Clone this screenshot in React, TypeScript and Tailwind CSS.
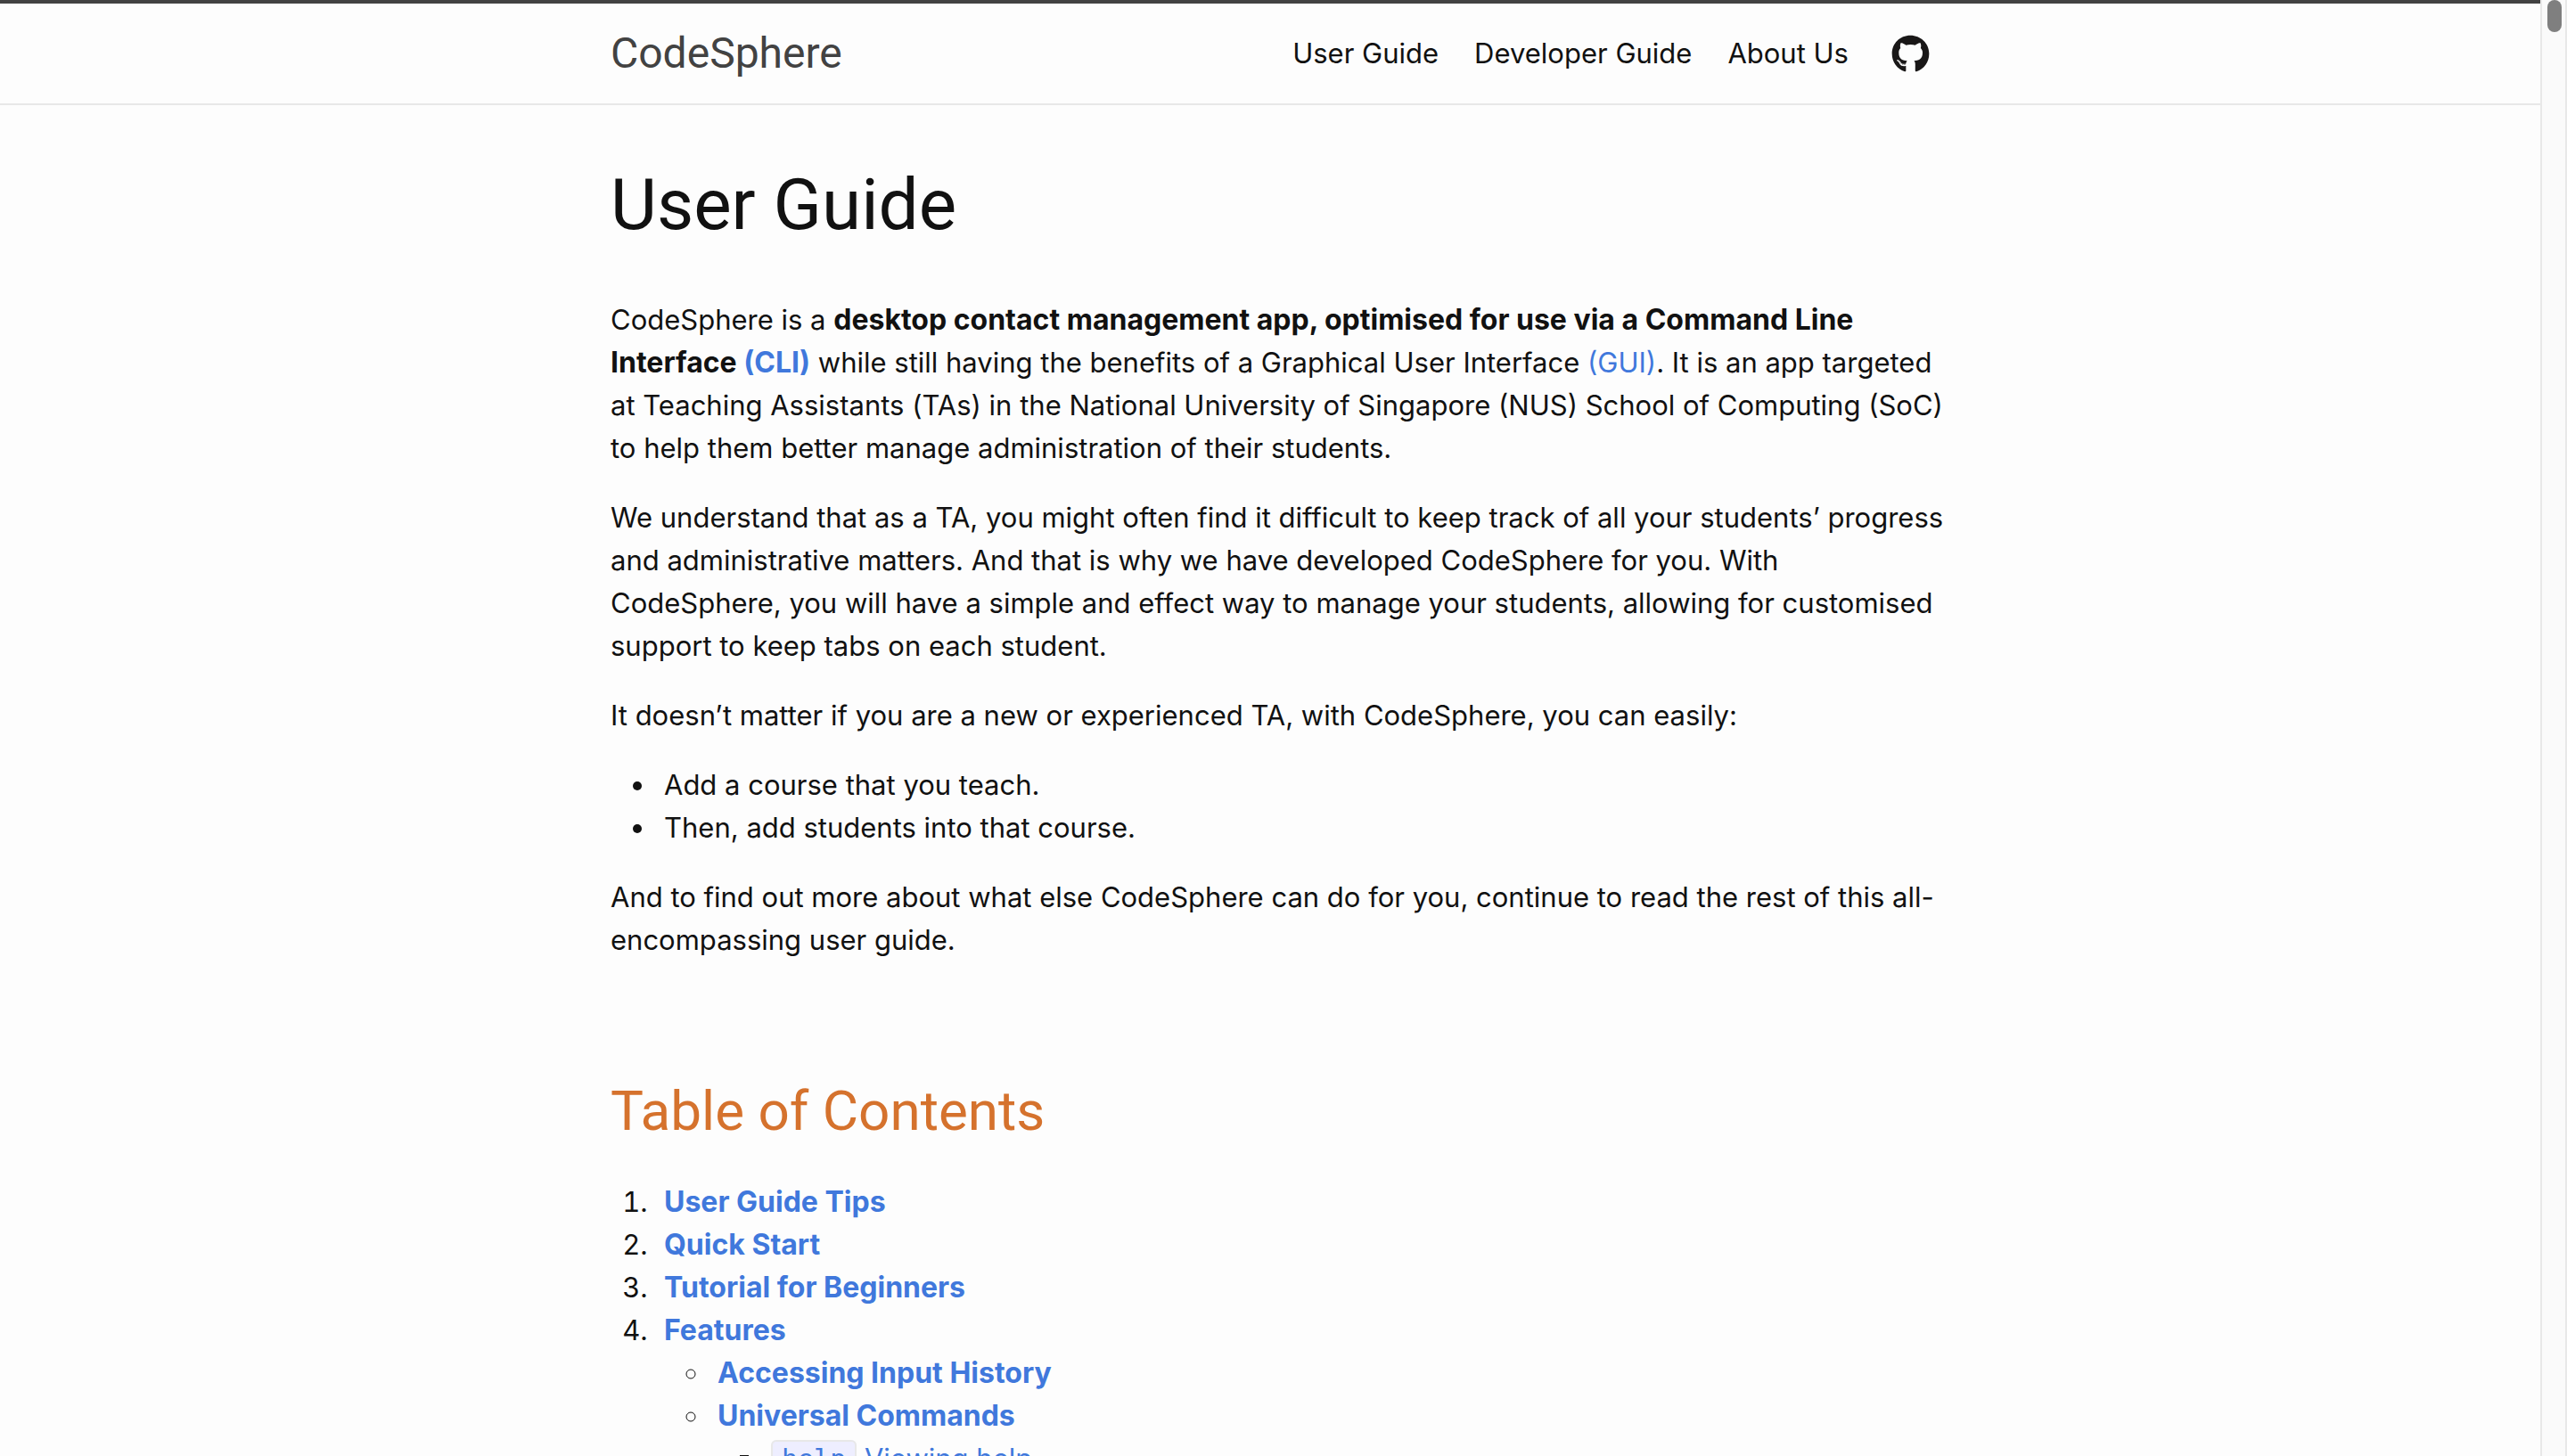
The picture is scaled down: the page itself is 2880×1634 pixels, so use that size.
import type { ReactNode } from "react";
import { FaGithub } from "react-icons/fa";

const navItems = ["User Guide", "Developer Guide", "About Us"];
const sections = ["User Guide Tips", "Quick Start", "Tutorial for Beginners"];

function Link({ children }: { children: ReactNode }) {
  return (
    <a href="#" className="text-[#4078dc] hover:underline">
      {children}
    </a>
  );
}

function Strong({ children }: { children: ReactNode }) {
  return <strong className="text-[32px] leading-none font-bold">{children}</strong>;
}

function Header() {
  return (
    <header className="border-t-4 border-b-2 border-t-[#424242] border-b-[#e8e8e8]">
      <div className="mx-auto flex h-28 max-w-[1480px] items-center justify-between">
        <a href="#" className="font-['Roboto',sans-serif] text-[48px] text-[#424242]">
          CodeSphere
        </a>
        <nav className="flex items-center gap-10">
          {navItems.map((item) => (
            <a key={item} href="#" className="hover:underline">
              {item}
            </a>
          ))}
          <a href="#" aria-label="GitHub" className="ml-2">
            <FaGithub className="size-[43px] text-[#191717]" />
          </a>
        </nav>
      </div>
    </header>
  );
}

function Contents() {
  return (
    <ol className="list-decimal pl-[50px]">
      {sections.map((s) => (
        <li key={s} className="pl-2.5">
          <Strong>
            <Link>{s}</Link>
          </Strong>
        </li>
      ))}
      <li className="pl-2.5">
        <Strong>
          <Link>Features</Link>
        </Strong>
        <ul className="list-[circle] pl-[52px]">
          <li className="pl-2">
            <Strong>
              <Link>Accessing Input History</Link>
            </Strong>
          </li>
          <li className="pl-2">
            <Strong>
              <Link>Universal Commands</Link>
            </Strong>
            <ul className="list-[square] pl-[52px]">
              <li className="pl-2">
                <Link>
                  <code className="rounded-md border-2 border-[#e8e8e8] bg-[#eeeeff] px-2.5 py-0.5 font-['DejaVu_Sans_Mono',monospace] text-[30px]">
                    help
                  </code>{" "}
                  Viewing help
                </Link>
              </li>
            </ul>
          </li>
        </ul>
      </li>
    </ol>
  );
}

function Scrollbar() {
  return (
    <div
      aria-hidden="true"
      className="w-[30px] shrink-0 border-x-2 border-[#e8e8e8] bg-[#fafafa] pl-1.5"
    >
      <div className="h-9 w-4 rounded-full bg-[#7f7f7f]" />
    </div>
  );
}

export default function App() {
  return (
    <div className="flex h-screen overflow-hidden bg-[#fdfdfd] font-['Inter',sans-serif] text-[31px] leading-[48px] text-[#111111]">
      <div className="min-w-0 flex-1 overflow-hidden">
        <Header />
        <main className="mx-auto max-w-[1480px] pt-16">
          <h1 className="mb-14 font-['Roboto',sans-serif] text-[80px] leading-[97px]">
            User Guide
          </h1>
          <div className="-mr-10 flex flex-col gap-[30px]">
            <p>
              CodeSphere is a{" "}
              <Strong>
                desktop contact management app, optimised for use via a Command Line
                <br />
                Interface <Link>(CLI)</Link>
              </Strong>{" "}
              while still having the benefits of a Graphical User Interface <Link>(GUI)</Link>. It is
              an app targeted
              <br />
              at Teaching Assistants (TAs) in the National University of Singapore (NUS) School of
              Computing (SoC)
              <br />
              to help them better manage administration of their students.
            </p>
            <p>
              We understand that as a TA, you might often find it difficult to keep track of all your
              students’ progress
              <br />
              and administrative matters. And that is why we have developed CodeSphere for you. With
              <br />
              CodeSphere, you will have a simple and effect way to manage your students, allowing for
              customised
              <br />
              support to keep tabs on each student.
            </p>
            <p>
              It doesn’t matter if you are a new or experienced TA, with CodeSphere, you can easily:
            </p>
            <ul className="list-disc pl-[52px]">
              <li className="pl-2">Add a course that you teach.</li>
              <li className="pl-2">Then, add students into that course.</li>
            </ul>
            <p>
              And to find out more about what else CodeSphere can do for you, continue to read the
              rest of this all-
              <wbr />
              encompassing user guide.
            </p>
            <h2 className="mt-[90px] font-['Roboto',sans-serif] text-[62px] leading-[96px] text-[#d5722d]">
              Table of Contents
            </h2>
            <Contents />
          </div>
        </main>
      </div>
      <Scrollbar />
    </div>
  );
}
